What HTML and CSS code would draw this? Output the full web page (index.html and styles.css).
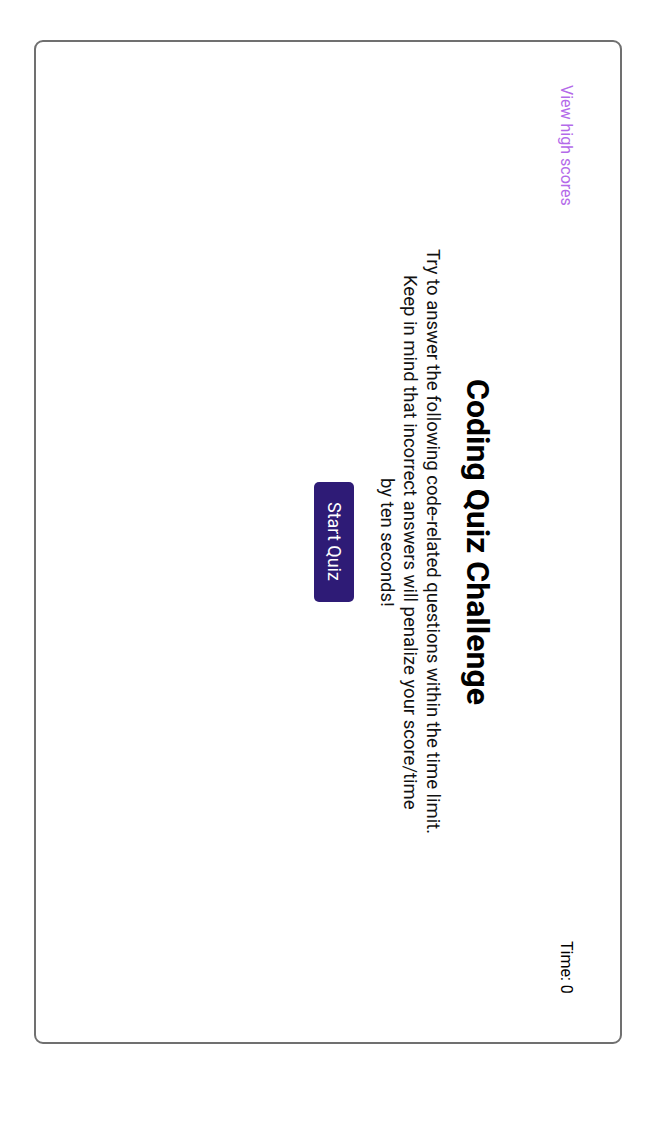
FILE: index.html
```html
<!DOCTYPE html>
<html lang="en">
<head>
<meta charset="utf-8">
<title>Coding Quiz Challenge</title>
<link rel="stylesheet" href="styles.css">
</head>
<body>
<div class="card">
  <header class="topbar">
    <a class="highscores" href="#">View high scores</a>
    <span class="timer">Time: 0</span>
  </header>
  <main class="intro">
    <h1 class="title">Coding Quiz Challenge</h1>
    <p class="desc">Try to answer the following code-related questions within the time limit.<br>Keep in mind that incorrect answers will penalize your score/time<br>by ten seconds!</p>
    <button class="start" type="button">Start Quiz</button>
  </main>
</div>
</body>
</html>
```
FILE: styles.css
```css
html, body {
  margin: 0;
  padding: 0;
  background: #ffffff;
}
body {
  font-family: Roboto, "Liberation Sans", Arial, sans-serif;
  color: #000;
  padding: 40px 0 0 34px;
}
.card {
  writing-mode: vertical-rl;
  box-sizing: border-box;
  width: 588px;
  height: 1004px;
  border: 2px solid #707070;
  border-radius: 9px;
  display: flex;
  flex-direction: column;
}
.topbar {
  display: flex;
  justify-content: space-between;
  padding-block: 44px 0;
  padding-inline: 43px 48px;
  font-size: 16px;
}
.highscores {
  color: #b46ae9;
  text-decoration: none;
}
.timer {
  color: #000;
}
.intro {
  text-align: center;
  padding-block-start: 61px;
  display: flex;
  flex-direction: column;
  align-items: center;
}
.title {
  font-size: 32px;
  line-height: 37px;
  font-weight: 700;
  margin: 0;
}
.desc {
  font-size: 18.5px;
  line-height: 23px;
  margin: 0;
  margin-block-start: 15px;
  color: #111;
}
.start {
  writing-mode: vertical-rl;
  font-family: inherit;
  font-size: 18px;
  line-height: 20px;
  color: #fff;
  background: #2e1b76;
  border: none;
  border-radius: 5px;
  padding: 20px 10px 21px;
  margin-block-start: 21px;
}
```
